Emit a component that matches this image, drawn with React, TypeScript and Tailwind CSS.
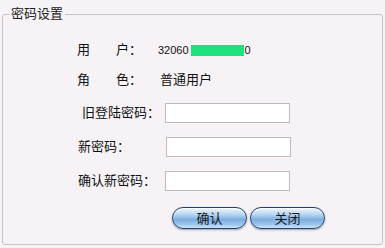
import React from 'react'

const font = { fontFamily: '"Liberation Sans", "Noto Sans CJK SC", sans-serif' }

function PillButton({ label }: { label: string }) {
  return (
    <button
      type="button"
      className="flex h-[22px] w-[75px] items-center justify-center rounded-full border border-[#22406f] bg-[linear-gradient(to_bottom,#eef6fd_0%,#bcd9f3_30%,#7eaee0_58%,#9cc5ec_82%,#cfe5f8_100%)] text-[13px] leading-none text-[#1a1a1a] shadow-[0_1px_2px_rgba(40,60,100,0.45),inset_0_1px_1px_rgba(255,255,255,0.9)]"
    >
      {label}
    </button>
  )
}

function TextInput() {
  return <input type="password" className="h-[20px] w-[125px] border border-[#bdbdbd] bg-white outline-none" />
}

export default function App() {
  return (
    <div className="h-[248px] w-[385px] bg-[#f6f2f5] px-[2px] pt-[7px] text-[#111]" style={font}>
      <fieldset className="h-[238px] w-[381px] rounded-[3px] border border-[#c6c2c6]">
        <legend className="ml-[6px] px-[2px] text-[13px] leading-[14px] text-[#222]">密码设置</legend>

        <div className="flex flex-col text-[13px]">
          <div className="mt-[21px] flex h-[16px] items-center">
            <span className="ml-[74px] w-[39px]">用</span>
            <span className="w-[42px]">户：</span>
            <span className="flex items-center text-[11px]">
              32060
              <span className="ml-[2px] inline-block h-[11px] w-[53px] bg-[#1ee27c]" />
              <span className="ml-[1px]">0</span>
            </span>
          </div>

          <div className="mt-[14px] flex h-[16px] items-center">
            <span className="ml-[74px] w-[39px]">角</span>
            <span className="w-[44px]">色：</span>
            <span>普通用户</span>
          </div>

          <div className="mt-[15px] flex h-[20px] items-center">
            <span className="ml-[79px] w-[83px]">旧登陆密码：</span>
            <TextInput />
          </div>

          <div className="mt-[14px] flex h-[20px] items-center">
            <span className="ml-[75px] w-[88px]">新密码：</span>
            <TextInput />
          </div>

          <div className="mt-[14px] flex h-[20px] items-center">
            <span className="ml-[75px] w-[87px]">确认新密码：</span>
            <TextInput />
          </div>

          <div className="mt-[16px] flex h-[22px] gap-[3px] pl-[169px]">
            <PillButton label="确认" />
            <PillButton label="关闭" />
          </div>
        </div>
      </fieldset>
    </div>
  )
}
